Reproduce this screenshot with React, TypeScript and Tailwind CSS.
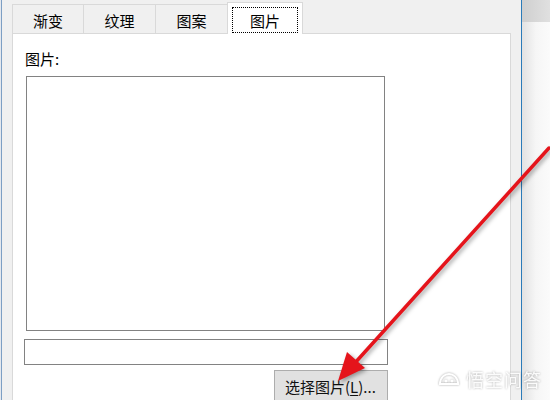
import React from "react";

const font = { fontFamily: '"Noto Sans CJK SC", "Noto Sans", sans-serif' };

function Tab({ label, w }: { label: string; w: string }) {
  return (
    <div
      className={`${w} h-[29px] border-l border-t border-[#d9d9d9] bg-[#f0f0f0] flex items-center justify-center pt-[2px] text-[15px] leading-none text-black`}
    >
      {label}
    </div>
  );
}

export default function App() {
  return (
    <div className="relative w-[550px] h-[400px] overflow-hidden flex bg-[#f0f0f0]" style={font}>
      {/* left edge */}
      <div className="w-[2px] h-full flex">
        <div className="w-[1px] h-full bg-[#e4e8ee]" />
        <div className="w-[1px] h-full bg-[#7d9fc4]" />
      </div>

      {/* dialog area */}
      <div className="w-[519px] h-full bg-[#f0f0f0] pl-[10px] pr-[10px] flex flex-col">
        {/* tabs */}
        <div className="h-[31px] mt-[2px] flex items-end relative z-10">
          <Tab label="渐变" w="w-[71px]" />
          <Tab label="纹理" w="w-[72px]" />
          <Tab label="图案" w="w-[72px]" />
          <div className="w-[76px] h-[32px] -mb-[1px] border-l border-t border-r border-[#d9d9d9] bg-white flex items-center justify-center pt-[4px] px-[4px] pb-[1px]">
            <div className="w-full h-full border border-dotted border-black flex items-center justify-center text-[15px] leading-none text-black pt-[1px]">
              图片
            </div>
          </div>
        </div>

        {/* panel */}
        <div className="flex-1 border-l border-t border-r border-[#d9d9d9] bg-white pl-[11px] flex flex-col">
          <div className="ml-[1px] mt-[16px] h-[18px] text-[15px] leading-[18px] text-black">图片:</div>
          <div className="ml-[2px] mt-[8px] w-[359px] h-[255px] border border-[#828282] bg-white" />
          <div className="mt-[8px] w-[364px] h-[26px] border border-[#828282] bg-white" />
          <div className="ml-[250px] mt-[5px] w-[114px] h-[32px] border border-[#adadad] bg-[#e1e1e1] flex items-center pl-[10px] text-[15px] leading-none text-[#111]">
            选择图片(<span className="underline underline-offset-2">L</span>)...
          </div>
        </div>
      </div>

      {/* blue window edge */}
      <div className="w-[1px] h-full bg-[#2b7bb9]" />

      {/* background window */}
      <div className="flex-1 h-full flex flex-col">
        <div className="h-[22px] bg-gradient-to-r from-[#cfcfcf] to-[#e0e0e0]" />
        <div className="flex-1 bg-gradient-to-r from-[#e2e2e2] via-[#f6f6f6] to-[#fbfbfb]" />
      </div>

      {/* red arrow */}
      <svg
        className="absolute left-0 top-0 pointer-events-none drop-shadow-[2px_2px_2px_rgba(0,0,0,0.35)]"
        width="550"
        height="400"
        viewBox="0 0 550 400"
      >
        <line x1="549" y1="148" x2="354" y2="364" stroke="#e5141b" strokeWidth="3.5" strokeLinecap="round" />
        <polygon points="338,381 347,352 365,368" fill="#e5141b" />
      </svg>

      {/* watermark */}
      <div className="absolute left-[437px] top-[370px] flex items-center gap-[5px] text-white/90 drop-shadow-[0_0_1px_rgba(0,0,0,0.35)]">
        <svg width="24" height="16" viewBox="0 0 24 16" fill="none" stroke="white" strokeWidth="2">
          <path d="M3 13 C3 6 8 3 12 3 C16 3 21 6 21 13 Z" />
          <circle cx="9" cy="10" r="1.6" fill="white" stroke="none" />
          <circle cx="15" cy="10" r="1.6" fill="white" stroke="none" />
        </svg>
        <span className="text-[18px] leading-none tracking-[1px]">悟空问答</span>
      </div>
    </div>
  );
}
